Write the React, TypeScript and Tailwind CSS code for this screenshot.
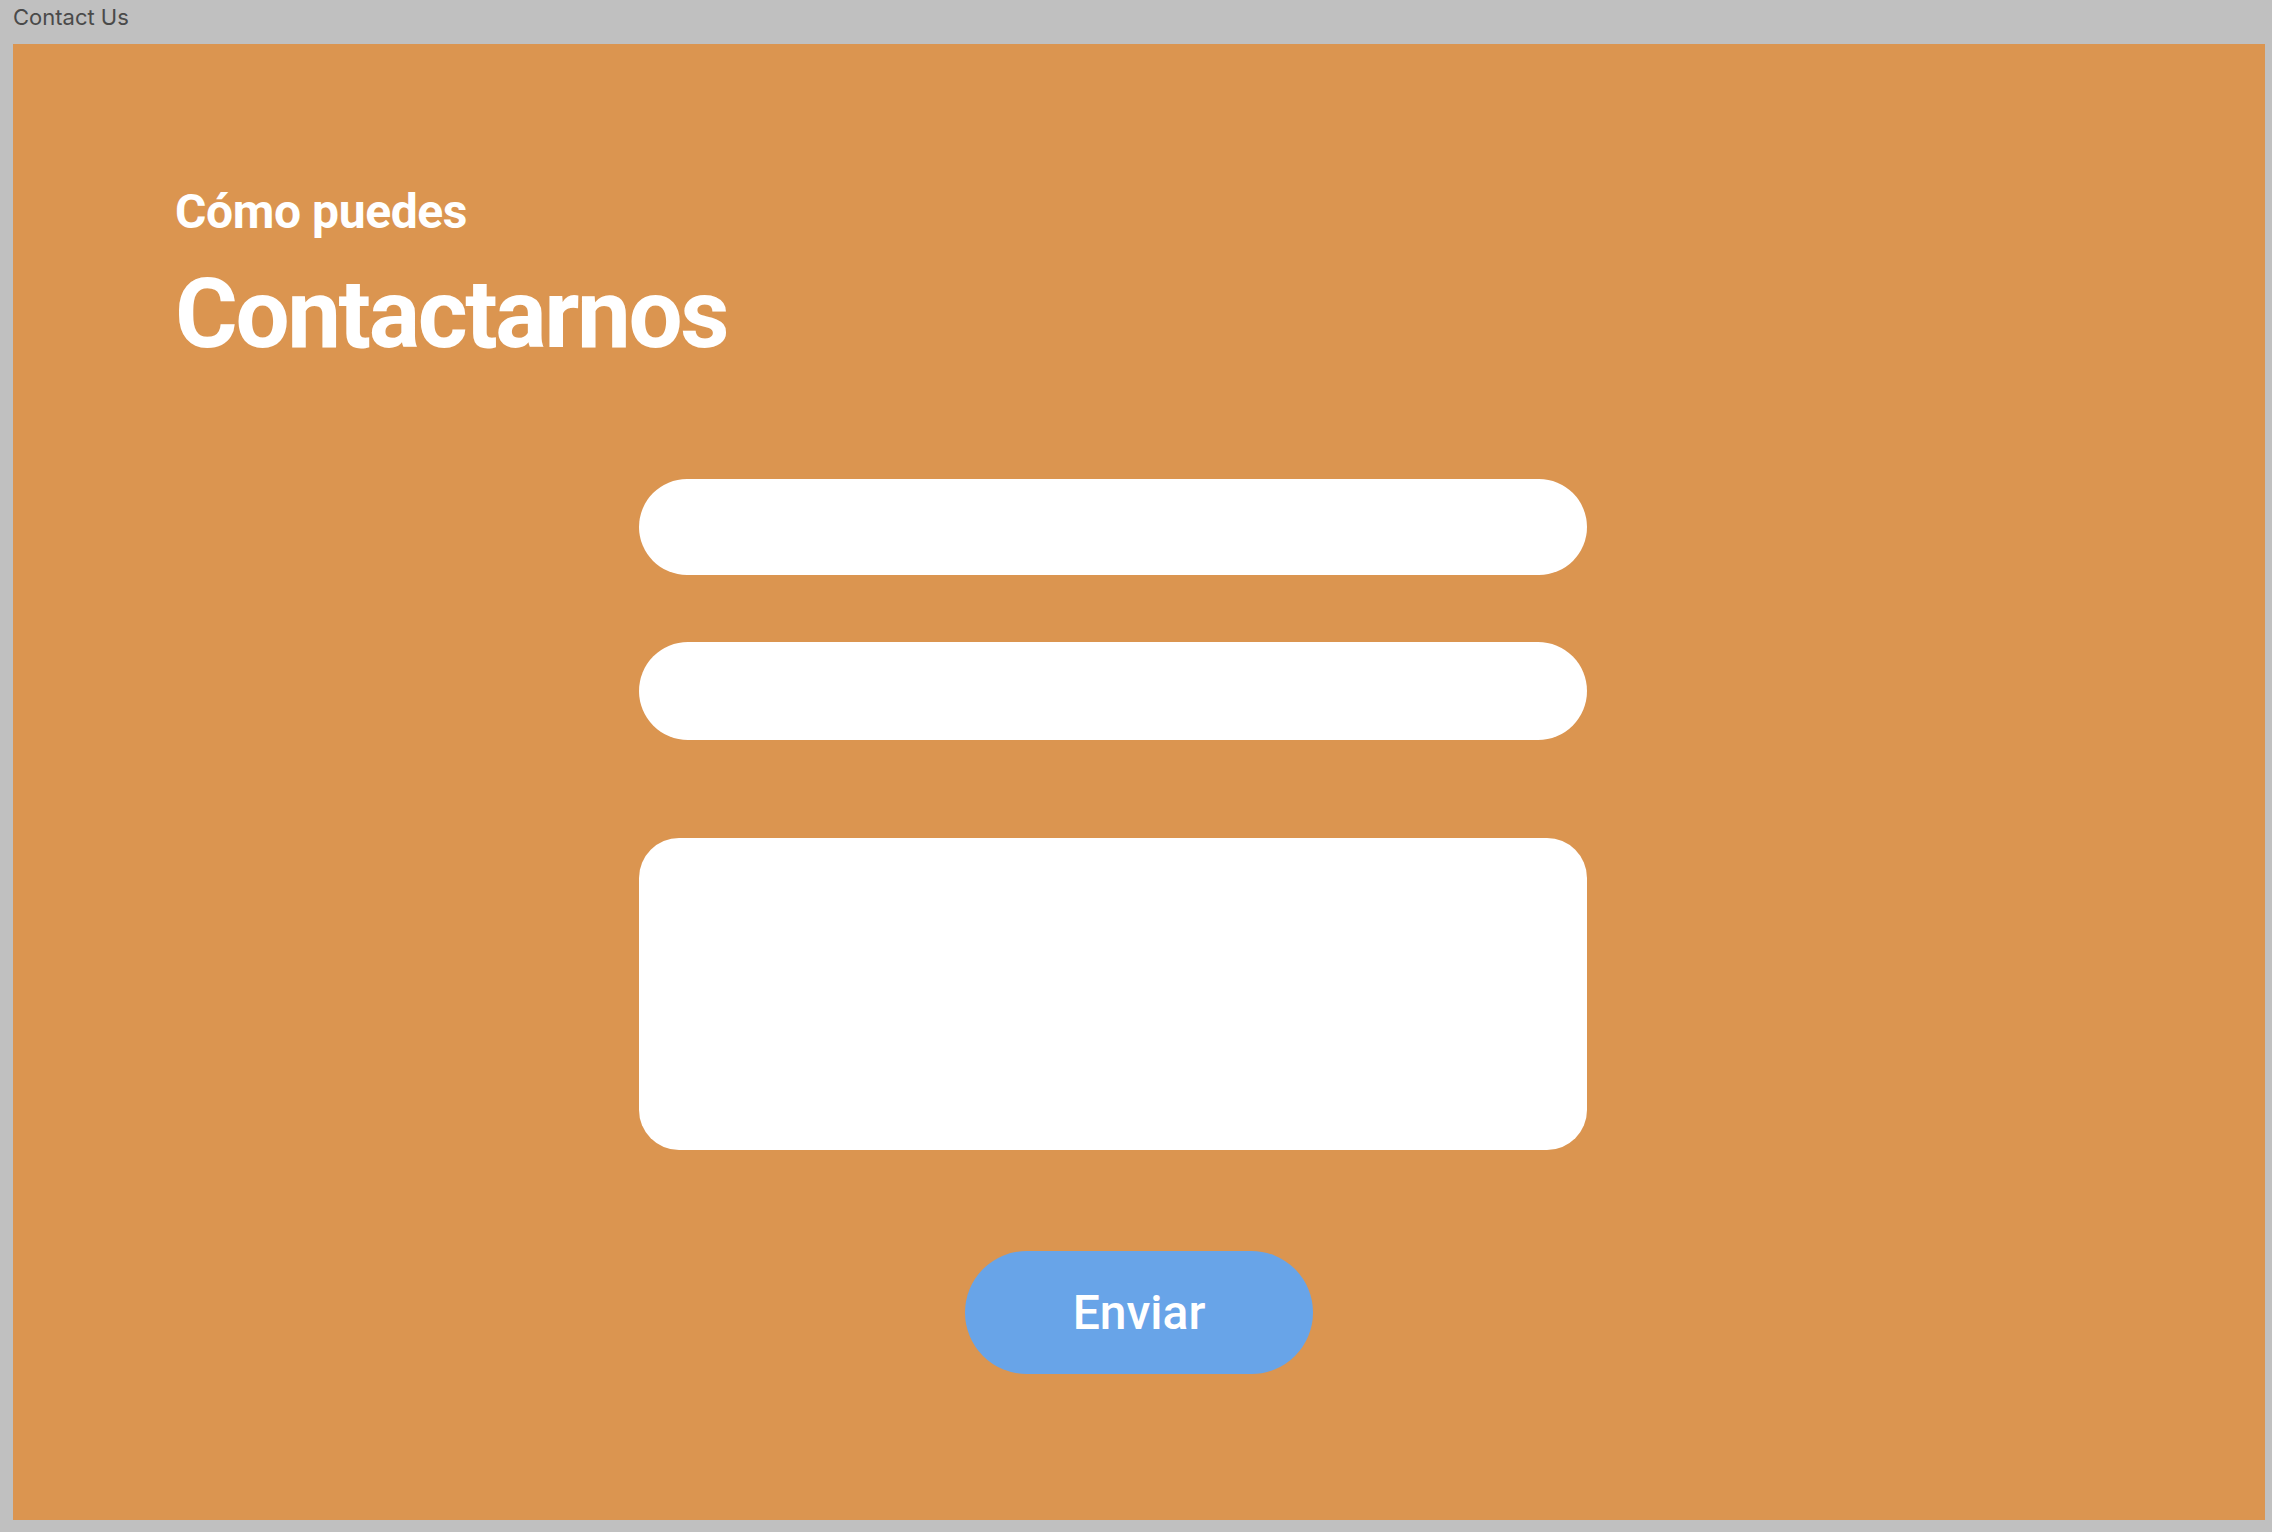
export default function App() {
  return (
    <div className="w-[2272px] h-[1532px] bg-[#c0c0c0] overflow-hidden">
      <div className="h-[44px] pl-[13px] pt-[6px]">
        <span className="block text-[22px] leading-none text-[#4a4a4a]" style={{ fontFamily: "Inter, 'Liberation Sans', sans-serif" }}>
          Contact Us
        </span>
      </div>
      <div className="ml-[13px] w-[2252px] h-[1476px] bg-[#db9550] pt-[144px]" style={{ fontFamily: "Roboto, 'Liberation Sans', sans-serif" }}>
        <div className="pl-[162px]">
          <h2 className="text-[48px] leading-none font-bold text-white tracking-[-0.4px]">Cómo puedes</h2>
          <h1 className="mt-[30px] text-[96px] leading-none font-bold text-white tracking-[-2.4px]">Contactarnos</h1>
        </div>
        <div className="pl-[626px] mt-[117px] flex flex-col">
          <div className="w-[948px] h-[96px] rounded-full bg-white" />
          <div className="mt-[67px] w-[948px] h-[98px] rounded-full bg-white" />
          <div className="mt-[98px] w-[948px] h-[312px] rounded-[40px] bg-white" />
        </div>
        <div className="pl-[952px] mt-[101px]">
          <button className="w-[348px] h-[123px] rounded-full bg-[#68a4e8] text-white text-[48px] font-medium leading-none flex items-center justify-center">
            Enviar
          </button>
        </div>
      </div>
    </div>
  );
}
